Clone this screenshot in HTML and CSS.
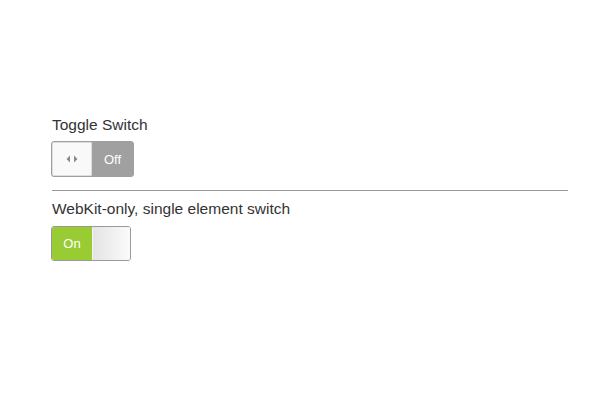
FILE: index.html
```html
<!DOCTYPE html>
<html>
<head>
<meta charset="utf-8">
<link rel="stylesheet" href="styles.css">
</head>
<body>
<div class="wrap">
  <div class="label">Toggle Switch</div>
  <div class="toggle">
    <div class="knob">
      <svg class="arrows" width="12" height="8" viewBox="0 0 12 8"><path d="M4 0.5 L0.5 4 L4 7.5 Z M8 0.5 L11.5 4 L8 7.5 Z" fill="#8a8a8a"/></svg>
    </div>
    <div class="off">Off</div>
  </div>
  <hr class="rule">
  <div class="label">WebKit-only, single element switch</div>
  <div class="wk">
    <div class="on">On</div>
    <div class="wk-knob"></div>
  </div>
</div>
</body>
</html>
```
FILE: styles.css
```css
html, body { margin: 0; padding: 0; background: #fff; }
body { font-family: "Liberation Sans", Arial, sans-serif; color: #333; }
.wrap { margin-left: 52px; width: 516px; padding-top: 116px; }
.label { font-size: 15.5px; line-height: 18px; }
.toggle {
  margin-top: 7px; margin-left: -1px;
  width: 83px; height: 36px; box-sizing: border-box;
  display: flex; border-radius: 3px; overflow: hidden;
  border: 1px solid #a0a0a0; background: #a0a0a0;
}
.knob {
  width: 40px; background: #f9f9f9; border-radius: 2px;
  display: flex; align-items: center; justify-content: center;
  box-shadow: inset 0 0 0 1px #ddd;
}
.arrows { display: block; }
.off {
  flex: 1; color: #fff; font-size: 13px;
  display: flex; align-items: center; justify-content: center;
}
.rule { border: 0; border-top: 1px solid #999; height: 0; margin: 13px 0 9px; }
.wk {
  margin-top: 8px; margin-left: -1px;
  width: 80px; height: 35px; box-sizing: border-box;
  display: flex; border-radius: 3px; overflow: hidden;
  border: 1px solid #999;
}
.on {
  width: 40px; background: #9c3; color: #fff; font-size: 13px;
  display: flex; align-items: center; justify-content: center;
  border-right: 1px solid #f4f4f4;
}
.wk-knob { flex: 1; background: linear-gradient(to right, #e4e4e4, #fbfbfb); }
```
